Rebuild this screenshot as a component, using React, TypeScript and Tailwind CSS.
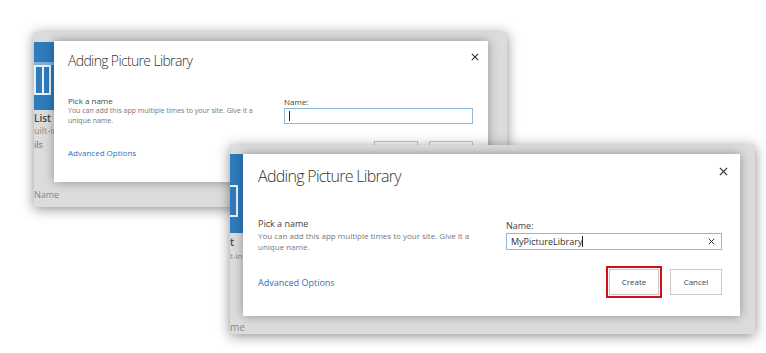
import React from "react";

const font = { fontFamily: '"Open Sans", "Noto Sans", sans-serif' };

function CloseX({ size, className }: { size: number; className?: string }) {
  return (
    <svg width={size} height={size} viewBox="0 0 10 10" className={className}>
      <path d="M1 1L9 9M9 1L1 9" stroke="#333" strokeWidth="1.4" fill="none" />
    </svg>
  );
}

export default function App() {
  return (
    <div className="relative w-[766px] h-[353px] bg-white overflow-hidden" style={font}>
      {/* Screenshot 1 (back) */}
      <div className="absolute left-[34px] top-[32px] w-[473px] h-[175px] bg-[#dcdcdc] shadow-[0_2px_12px_rgba(0,0,0,0.45)] overflow-hidden">
        <div className="absolute left-0 top-[10px] w-[20px] h-[68px] bg-[#2e7bbd]">
          <div className="absolute left-0 top-[20px] w-[20px] h-[3px] bg-[#7fb0d8]" />
          <div className="absolute left-0 top-[23px] w-[17px] h-[30px] border-2 border-[#e8f0f8] flex">
            <div className="w-[8px] border-r-2 border-[#e8f0f8]" />
          </div>
        </div>
        <div className="absolute left-0 top-[80px] text-[10px] leading-[12px] text-[#444] font-semibold">List</div>
        <div className="absolute left-0 top-[93px] text-[9px] leading-[12px] text-[#888]">uilt-in</div>
        <div className="absolute left-0 top-[107px] text-[9px] leading-[12px] text-[#2e7bbd]">ils</div>
        <div className="absolute left-0 top-[157px] text-[9px] leading-[12px] text-[#888]">Name</div>

        <div className="absolute left-[20px] top-[9px] w-[434px] h-[141px] bg-white shadow-[0_0_10px_rgba(0,0,0,0.35)]">
          <div className="flex items-start justify-between pl-[14px] pr-[9px] pt-[10px]">
            <div className="text-[14px] leading-[20px] font-light text-[#333] tracking-[-0.65px]">Adding Picture Library</div>
            <CloseX size={8} className="mt-[2px]" />
          </div>
          <div className="flex pl-[14px] pt-[24px]">
            <div className="w-[216px] flex flex-col">
              <div className="text-[8px] leading-[11px] text-[#444]">Pick a name</div>
              <div className="text-[7px] leading-[10px] text-[#777] w-[200px]">You can add this app multiple times to your site. Give it a unique name.</div>
              <div className="mt-[21px] text-[8px] leading-[11px] text-[#2a72c2]">Advanced Options</div>
            </div>
            <div className="flex flex-col pt-[1px]">
              <div className="text-[8px] leading-[11px] text-[#444]">Name:</div>
              <div className="mt-[1px] w-[189px] h-[16px] border border-[#8db8de] flex items-center pl-[4px]">
                <div className="w-[1px] h-[10px] bg-[#222]" />
              </div>
              <div className="flex justify-end gap-[11px] mt-[17px]">
                <div className="w-[44px] h-[20px] border border-[#c8c8c8]" />
                <div className="w-[44px] h-[20px] border border-[#c8c8c8]" />
              </div>
            </div>
          </div>
        </div>
      </div>

      {/* Screenshot 2 (front) */}
      <div className="absolute left-[230px] top-[145px] w-[525px] h-[189px] bg-[#dcdcdc] shadow-[0_2px_12px_rgba(0,0,0,0.45)] overflow-hidden">
        <div className="absolute left-0 top-[9px] w-[13px] h-[79px] bg-[#2e7bbd]">
          <div className="absolute left-0 top-[31px] w-[8px] h-[32px] border-2 border-l-0 border-[#e8f0f8]" />
        </div>
        <div className="absolute left-0 top-[91px] text-[10px] leading-[12px] text-[#444] font-semibold">t</div>
        <div className="absolute left-0 top-[105px] text-[8px] leading-[12px] text-[#888]">t-in</div>
        <div className="absolute left-0 top-[176px] text-[10px] leading-[12px] text-[#888]">me</div>

        <div className="absolute left-[13px] top-[9px] w-[497px] h-[162px] bg-white shadow-[0_0_10px_rgba(0,0,0,0.35)]">
          <div className="flex items-start justify-between pl-[15px] pr-[12px] pt-[11px]">
            <div className="text-[16px] leading-[22px] font-light text-[#333] tracking-[-0.7px]">Adding Picture Library</div>
            <CloseX size={9} className="mt-[2px]" />
          </div>
          <div className="flex pl-[15px] pt-[30px]">
            <div className="w-[248px] flex flex-col">
              <div className="text-[9px] leading-[13px] text-[#444]">Pick a name</div>
              <div className="text-[8px] leading-[11px] text-[#777] w-[226px]">You can add this app multiple times to your site. Give it a unique name.</div>
              <div className="mt-[24px] text-[9px] leading-[13px] text-[#2a72c2]">Advanced Options</div>
            </div>
            <div className="flex flex-col pt-[2px]">
              <div className="text-[9px] leading-[13px] text-[#444]">Name:</div>
              <div className="mt-[1px] w-[216px] h-[17px] border border-[#8db8de] flex items-center pl-[4px] pr-[6px]">
                <span className="text-[9px] leading-[12px] text-[#333]">MyPictureLibrary</span>
                <div className="w-[1px] h-[11px] bg-[#222]" />
                <div className="flex-1" />
                <CloseX size={7} />
              </div>
              <div className="flex justify-end items-center gap-[11px] mt-[19px]">
                <div className="relative">
                  <div className="absolute -inset-[3px] border-2 border-[#d0101a]" />
                  <div className="w-[50px] h-[26px] border border-[#c8c8c8] flex items-center justify-center text-[8px] text-[#444]">Create</div>
                </div>
                <div className="w-[52px] h-[26px] border border-[#c8c8c8] flex items-center justify-center text-[8px] text-[#444]">Cancel</div>
              </div>
            </div>
          </div>
        </div>
      </div>
    </div>
  );
}
